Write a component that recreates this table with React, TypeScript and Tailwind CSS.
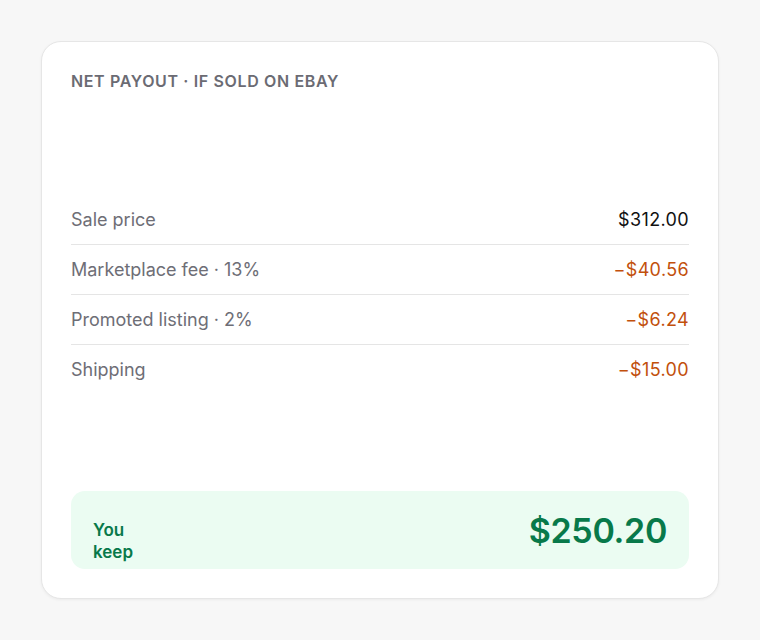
import React from "react"

const rows = [
  { label: "Sale price", value: "$312.00", neg: false },
  { label: "Marketplace fee · 13%", value: "−$40.56", neg: true },
  { label: "Promoted listing · 2%", value: "−$6.24", neg: true },
  { label: "Shipping", value: "−$15.00", neg: true },
]

export default function App() {
  return (
    <div
      className="min-h-screen bg-[#f7f7f7] p-[41px] flex"
      style={{ fontFamily: "Inter, 'Noto Sans', sans-serif" }}
    >
      {/* Payout card */}
      <div className="flex-1 flex flex-col bg-white rounded-[20px] border border-[#e6e6e6] shadow-[0_1px_3px_rgba(0,0,0,0.05)] px-[29px] pt-[29px] pb-[29px]">
        <h2 className="text-[16px] leading-5 font-semibold tracking-[0.04em] text-[#6b6b73] uppercase">
          Net payout · if sold on eBay
        </h2>

        <div className="flex-1 flex flex-col justify-center pt-[6px]">
          {rows.map((row, i) => (
            <div
              key={row.label}
              className={`flex justify-between items-center h-[50px] text-[18px] ${
                i > 0 ? "border-t border-[#e5e5e5]" : ""
              }`}
            >
              <span className="text-[#6e6e76]">{row.label}</span>
              <span className={`tracking-[0.02em] ${row.neg ? "text-[#c2500c]" : "text-[#111111]"}`}>
                {row.value}
              </span>
            </div>
          ))}
        </div>

        <div className="flex justify-between items-center h-[78px] rounded-[14px] bg-[#ebfcf2] px-[22px]">
          <span className="w-[50px] text-[17px] leading-[22px] font-semibold text-[#08794a] pt-[22px]">
            You keep
          </span>
          <span className="text-[34px] font-semibold text-[#08794a] tracking-[-0.01em]">$250.20</span>
        </div>
      </div>
    </div>
  )
}
